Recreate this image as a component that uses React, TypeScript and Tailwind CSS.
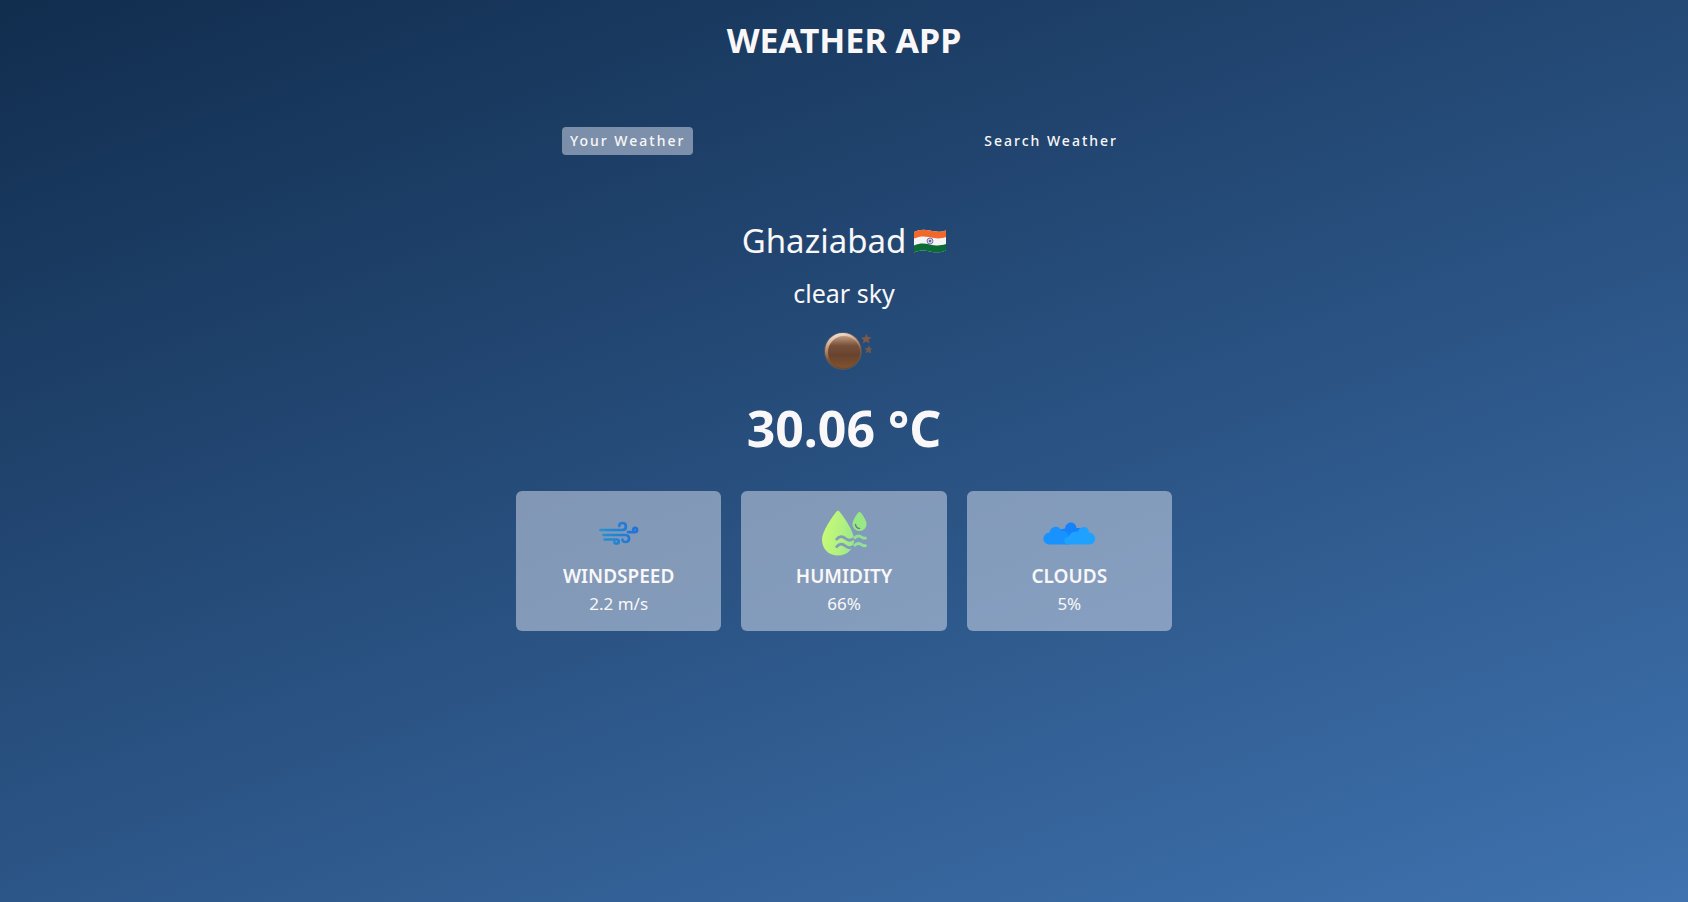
import type { ReactNode } from "react";

function FlagIcon() {
  return (
    <svg role="img" aria-label="India" viewBox="0 0 32 24" className="h-6 w-8">
      <defs>
        <clipPath id="flag-wave">
          <path d="M0 3C6 .3 10 .3 16 1.600S26 3.400 32 1.400V21.400C26 23.800 22 23.600 16 22.400S6 21 0 23.400Z" />
        </clipPath>
      </defs>
      <g clipPath="url(#flag-wave)">
        <rect width="32" height="24" fill="#f4f4f4" />
        <path d="M0 0H32V8C26 10 22 9.600 16 8.300S6 7 0 9.600Z" fill="#f2672a" />
        <path d="M0 16.600C6 14 10 14.300 16 15.500S26 17 32 15V24H0Z" fill="#0b6b35" />
      </g>
      <circle cx="16" cy="12" r="3" fill="#c9cbe0" stroke="#5c5f9c" strokeWidth=".8" />
      <circle cx="16" cy="12" r="1" fill="#3d4187" />
    </svg>
  );
}

function ClearNightIcon() {
  return (
    <svg role="img" aria-label="Clear night" viewBox="0 0 56 50" className="h-[50px] w-14">
      <defs>
        <linearGradient id="moon-rim" x1="0.35" y1="0" x2="0.6" y2="1">
          <stop offset="0" stopColor="#f5e6dc" />
          <stop offset=".3" stopColor="#c99b7c" />
          <stop offset=".65" stopColor="#82522f" />
          <stop offset="1" stopColor="#704629" />
        </linearGradient>
        <linearGradient id="moon-face" x1="0" y1="0" x2="0" y2="1">
          <stop offset="0" stopColor="#c39a80" />
          <stop offset=".3" stopColor="#77503a" />
          <stop offset=".6" stopColor="#68432d" />
          <stop offset="1" stopColor="#80532f" />
        </linearGradient>
      </defs>
      <circle cx="27" cy="25" r="19" fill="#7b6355" opacity=".5" />
      <circle cx="27" cy="25" r="18" fill="url(#moon-rim)" />
      <circle cx="28" cy="26" r="16" fill="url(#moon-face)" />
      <path d="M50.500 7.500L51.800 11L55.500 11.300L52.600 13.700L53.600 17.500L50.200 15.600L46.800 17.600L47.600 13.900L45.200 11.600L48.800 11.200Z" fill="#7b5a4b" />
      <path d="M53 19L54.100 22L56 22.500L54.500 24.500L55.300 27.500L52.500 26L49.700 27.300L50.500 24.400L48.500 22.300L51.700 22Z" fill="#6f594f" />
    </svg>
  );
}

function WindIcon() {
  return (
    <svg aria-hidden="true" viewBox="0 0 50 50" className="size-[50px]">
      <defs>
        <linearGradient id="wind-tone" gradientUnits="userSpaceOnUse" x1="5" y1="0" x2="45" y2="0">
          <stop offset="0" stopColor="#2693cf" />
          <stop offset="1" stopColor="#1e6fdc" />
        </linearGradient>
      </defs>
      <g fill="none" stroke="url(#wind-tone)" strokeWidth="2.700" strokeLinecap="round" strokeLinejoin="round">
        <path d="M6.500 22H28.500C33 22 33 15 28.500 15C26.500 15 25.200 16.200 25.200 18" />
        <path d="M9.500 27H31.500C36.500 27 36 34 31.500 34C29.500 34 28.300 33 28.500 31.500" />
        <path d="M10.500 31.500H22.500C25.500 31.500 25.500 35.500 22.500 35.500C21 35.500 20.300 35 20.500 34" />
        <path d="M34 24.200H40.500C44 24.200 43.500 19.800 41.300 19.800C39.800 19.800 39.100 20.800 39.300 21.800" />
      </g>
    </svg>
  );
}

function HumidityIcon() {
  return (
    <svg aria-hidden="true" viewBox="0 0 50 50" className="size-[50px]">
      <defs>
        <linearGradient id="drop-tone" gradientUnits="userSpaceOnUse" x1="3" y1="24" x2="47" y2="32">
          <stop offset="0" stopColor="#c8fa76" />
          <stop offset=".4" stopColor="#b3f27f" />
          <stop offset="1" stopColor="#86df95" />
        </linearGradient>
        <mask id="drop-cut">
          <rect width="50" height="50" fill="#fff" />
          <path d="M17 32C20.500 27.500 23.500 28 26.500 30.500S31.500 33 36 29.500M17 39.500C20.500 35 23.500 35.500 26.500 38S31.500 40.500 36 37" fill="none" stroke="#000" strokeWidth="2.800" />
        </mask>
      </defs>
      <path d="M19 2.500C20.500 2.500 35 22 35 31.500C35 41 28.500 47.500 19 47.500S3 41 3 31.500C3 22 17.500 2.500 19 2.500Z" fill="url(#drop-tone)" mask="url(#drop-cut)" />
      <path d="M40.500 4C42 4 47.500 12 47.500 16C47.500 20 44.500 23 40.500 23S33.500 20 33.500 16C33.500 12 39 4 40.500 4Z" fill="#98e986" />
      <path d="M36.500 16.500C36.700 18.700 38.200 20.200 40.500 20.500" fill="none" stroke="#62867f" strokeWidth="1.500" strokeLinecap="round" />
      <path d="M35 30.500C38 27 40.500 27.500 43 29.300C44.500 30.400 46 30.400 47.500 29.800M35 38C38 34.500 40.500 35 43 36.800C44.500 38 46 38 47.500 37.300" fill="none" stroke="#90e392" strokeWidth="2.800" />
    </svg>
  );
}

function CloudsIcon() {
  return (
    <svg aria-hidden="true" viewBox="0 0 54 50" className="h-[50px] w-[54px]">
      <path d="M17 36V24C18 21 20 21 23 20.500C24 13 33.500 12.500 34.500 20H41V36Z" fill="#1482fa" />
      <path d="M7 36.500C-.5 36-.5 25.500 7.500 24.500C8.500 18 17 16.500 19.500 23C23 22 27 25 27 29V36.500Z" fill="#1792ff" />
      <path d="M26 36.500C20.500 36 21.500 29 27 28.500C28 24.500 31.500 23.500 36 23.500C38 17.500 46.500 17.500 47 24.500C55 25 55 36.500 47.500 36.500Z" fill="#1fa2ff" />
    </svg>
  );
}

type StatProps = { label: string; value: string; icon: ReactNode };

function StatCard({ label, value, icon }: StatProps) {
  return (
    <article className="flex flex-col items-center rounded-md bg-[#dbe2ef]/50 px-4 pt-[17px] pb-[15px]">
      {icon}
      <h3 className="mt-1 text-[19px] leading-7 font-semibold uppercase">{label}</h3>
      <p className="mt-0.5 text-[17px] leading-6">{value}</p>
    </article>
  );
}

export default function App() {
  return (
    <div className="min-h-screen bg-[linear-gradient(160deg,#112d4e_0%,#3f72af_100%)] font-['Noto_Sans',sans-serif] text-[#f9f7f7]">
      <h1 className="pt-5 text-center text-[34px] leading-10 font-bold uppercase">Weather App</h1>

      <nav className="mx-auto mt-[67px] flex max-w-[564px] items-center justify-between">
        <button type="button" className="rounded-sm bg-[#dbe2ef]/50 px-2 pb-px text-sm leading-[27px] font-medium tracking-[2px]">
          Your Weather
        </button>
        <button type="button" className="rounded-sm px-2 pb-px text-sm leading-[27px] font-medium tracking-[2px]">
          Search Weather
        </button>
      </nav>

      <main className="mx-auto flex max-w-[656px] flex-col items-center pt-16">
        <div className="flex items-center gap-2">
          <h2 className="text-[33px] leading-11">Ghaziabad</h2>
          <FlagIcon />
        </div>
        <p className="mt-3 mb-[15px] text-[25px] leading-9">clear sky</p>
        <ClearNightIcon />
        <p className="mt-[22px] text-[50px] leading-15 font-bold">30.06 °C</p>
        <section aria-label="Conditions" className="mt-[33px] grid w-full grid-cols-3 gap-5">
          <StatCard label="Windspeed" value="2.2 m/s" icon={<WindIcon />} />
          <StatCard label="Humidity" value="66%" icon={<HumidityIcon />} />
          <StatCard label="Clouds" value="5%" icon={<CloudsIcon />} />
        </section>
      </main>
    </div>
  );
}
